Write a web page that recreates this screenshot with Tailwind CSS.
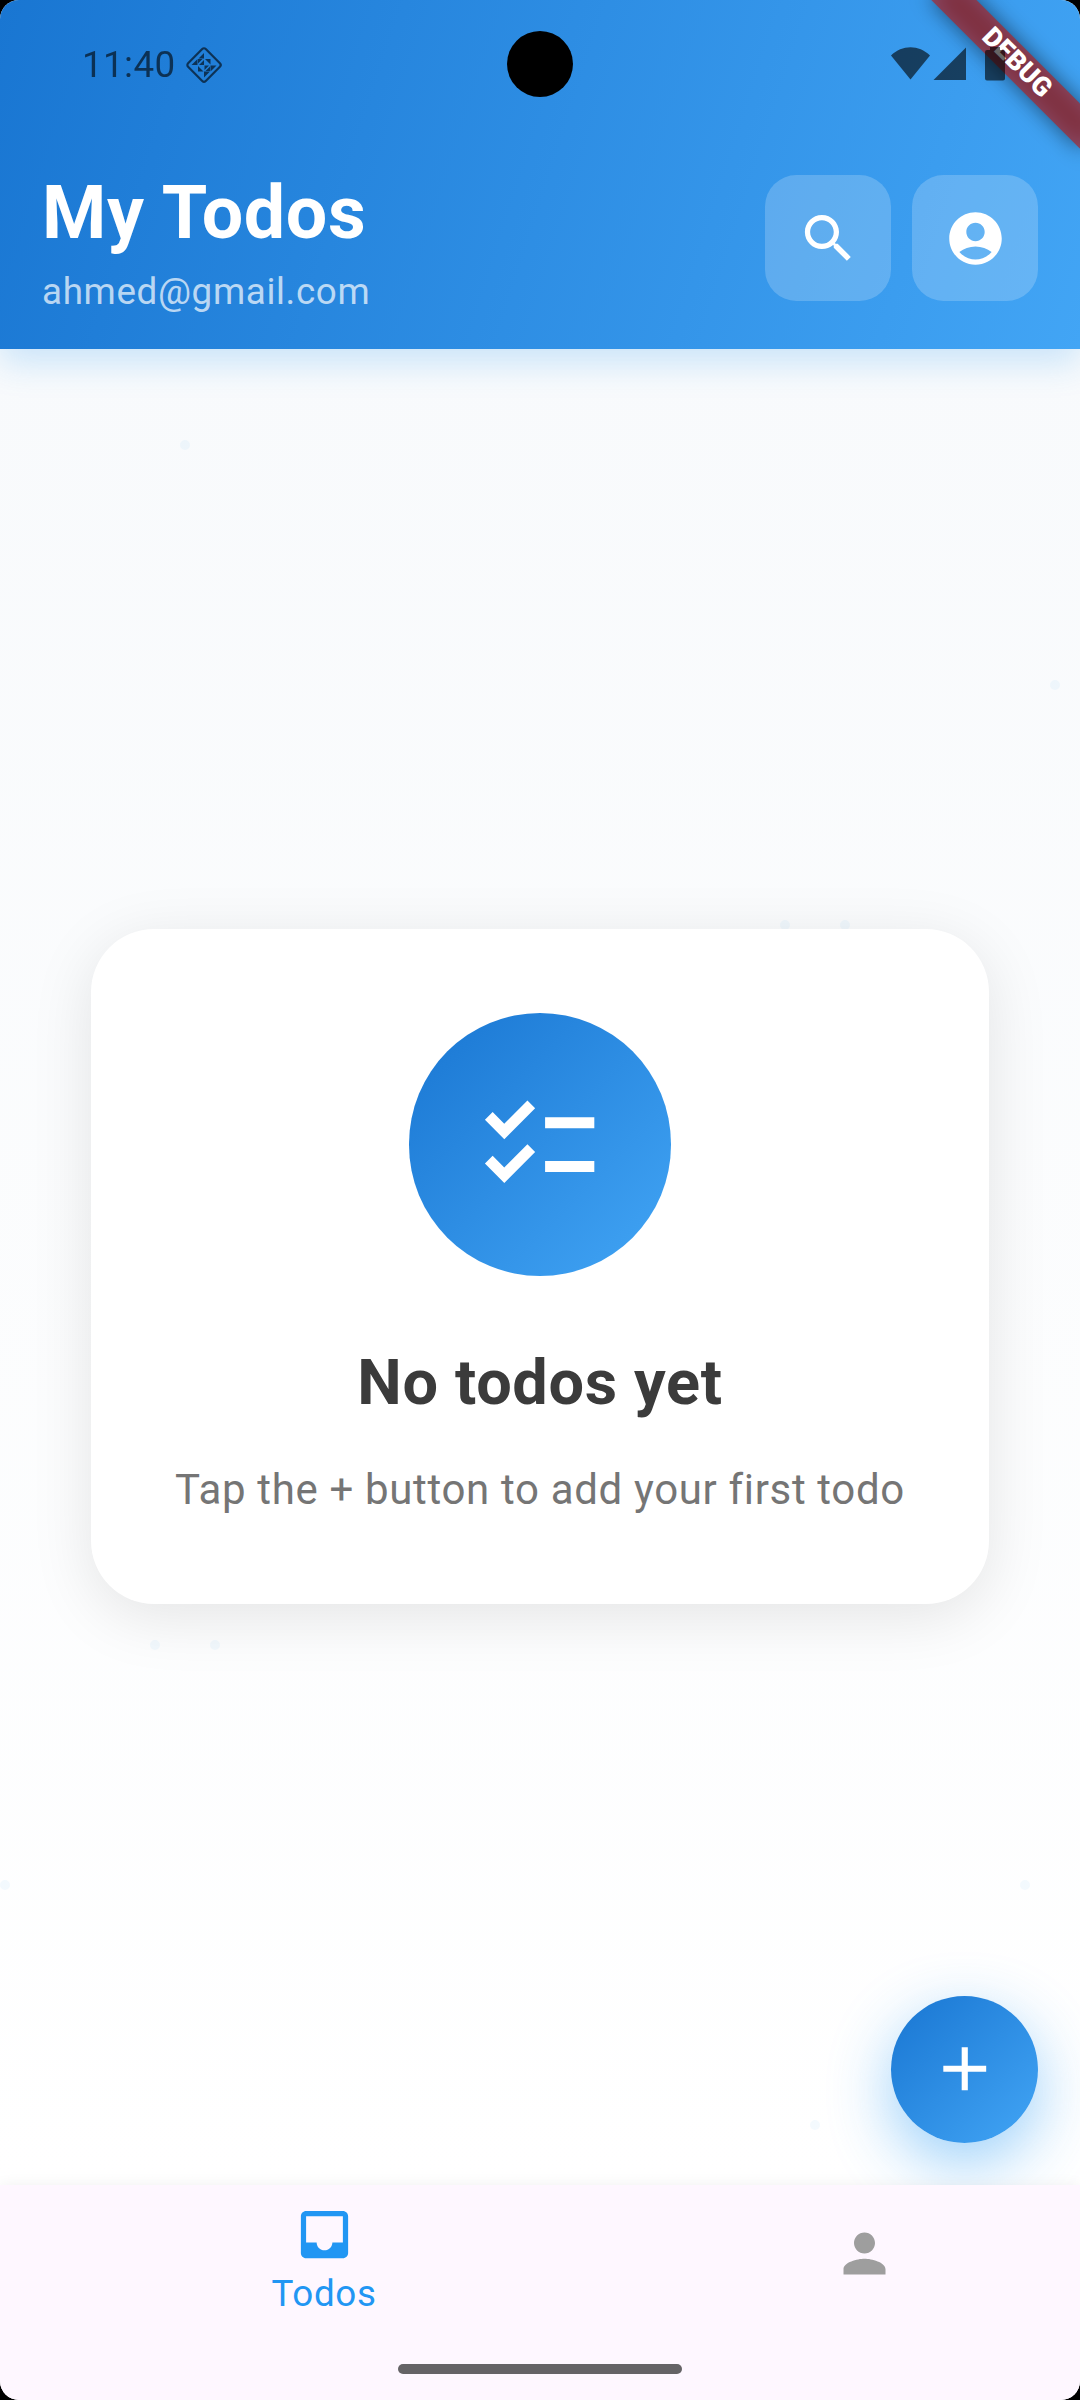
<!DOCTYPE html>
<html lang="en">
<head>
<meta charset="utf-8">
<title>My Todos</title>
<script src="https://cdn.jsdelivr.net/npm/@tailwindcss/browser@4"></script>
</head>
<body class="bg-black">
<div class="relative flex h-[2400px] w-[1080px] flex-col overflow-hidden rounded-[19px] bg-white font-[Roboto,sans-serif]">

  <header class="relative z-10 flex h-[349px] shrink-0 items-start justify-between bg-[linear-gradient(107.9deg,#1976d2,#42a5f5)] px-[42px] pt-[175px] shadow-[0_13px_33px_rgba(33,150,243,0.22)]">
    <div class="flex flex-col pt-px">
      <h1 class="text-[73.5px] leading-[74px] font-bold tracking-[0.656px] text-white">My Todos</h1>
      <p class="mt-[20px] text-[36.75px] leading-[44px] tracking-[0.656px] text-white/70">ahmed@gmail.com</p>
    </div>
    <div class="flex gap-[21px]">
      <button class="flex size-[126px] items-center justify-center rounded-[31.5px] bg-white/20">
        <svg class="size-[63px] fill-white" viewBox="0 0 24 24"><path d="M15.5 14h-.79l-.28-.27C15.41 12.59 16 11.11 16 9.5 16 5.91 13.09 3 9.5 3S3 5.91 3 9.5 5.91 16 9.5 16c1.61 0 3.09-.59 4.23-1.57l.27.28v.79l5 4.99L20.49 19l-4.99-5zm-6 0C7.01 14 5 11.99 5 9.5S7.01 5 9.5 5 14 7.01 14 9.5 11.99 14 9.5 14z"/></svg>
      </button>
      <button class="flex size-[126px] items-center justify-center rounded-[31.5px] bg-white/20">
        <svg class="size-[63px] fill-white" viewBox="0 0 24 24"><path d="M12 2C6.48 2 2 6.48 2 12s4.48 10 10 10 10-4.48 10-10S17.52 2 12 2zm0 4c1.93 0 3.5 1.57 3.5 3.5S13.93 13 12 13s-3.5-1.57-3.5-3.5S10.07 6 12 6zm0 14c-2.03 0-4.43-.82-6.14-2.88C7.55 15.8 9.68 15 12 15s4.45.8 6.14 2.12C16.43 19.18 14.03 20 12 20z"/></svg>
      </button>
    </div>
  </header>

  <main class="relative flex flex-1 flex-col items-center bg-[linear-gradient(180deg,#f8fafc,#ffffff)] pt-[580px]">
    <svg class="absolute inset-0 h-full w-full fill-[#2196f3]/5" viewBox="0 0 1080 1836">
      <circle cx="185" cy="96" r="5"/><circle cx="1055" cy="336" r="5"/>
      <circle cx="785" cy="576" r="5"/><circle cx="845" cy="576" r="5"/>
      <circle cx="155" cy="1296" r="5"/><circle cx="215" cy="1296" r="5"/>
      <circle cx="5" cy="1536" r="5"/><circle cx="1025" cy="1536" r="5"/>
      <circle cx="815" cy="1776" r="5"/>
    </svg>
    <section class="relative flex h-[675px] w-[898px] flex-col items-center rounded-[63px] bg-white pt-[84px] shadow-[0_13px_63px_rgba(0,0,0,0.1)]">
      <div class="flex size-[262.5px] items-center justify-center rounded-full bg-[linear-gradient(135deg,#1976d2,#42a5f5)]">
        <svg class="size-[131.25px] fill-white" viewBox="0 0 24 24"><path d="M22 7h-9v2h9V7zm0 8h-9v2h9v-2zM5.54 11L2 7.46l1.41-1.41 2.12 2.12 4.24-4.24 1.41 1.41L5.54 11zm0 8L2 15.46l1.41-1.41 2.12 2.12 4.24-4.24 1.41 1.41L5.54 19z"/></svg>
      </div>
      <h2 class="mt-[70px] text-[63px] leading-[74px] font-bold tracking-[0.656px] text-[#3b3b3b]">No todos yet</h2>
      <p class="mt-[46px] text-[42px] leading-[48px] tracking-[0.656px] text-[#757575]">Tap the + button to add your first todo</p>
    </section>
    <button class="absolute top-[1646.5px] right-[42px] flex size-[147px] items-center justify-center rounded-full bg-[linear-gradient(135deg,#1976d2,#42a5f5)] shadow-[0_21px_63px_rgba(33,150,243,0.45)]">
      <svg class="size-[73.5px] fill-white" viewBox="0 0 24 24"><path d="M19 13h-6v6h-2v-6H5v-2h6V5h2v6h6v2z"/></svg>
    </button>
  </main>

  <nav class="relative z-10 flex h-[215px] shrink-0 items-start bg-[#fef7ff] shadow-[0_0_14px_rgba(0,0,0,0.06)]">
    <a class="flex w-3/5 flex-col items-center pt-[18px] text-[#2196f3]">
      <svg class="size-[63px] fill-current" viewBox="0 0 24 24"><path d="M19 3H4.99c-1.11 0-1.98.89-1.98 2L3 19c0 1.1.88 2 1.99 2H19c1.1 0 2-.9 2-2V5c0-1.11-.9-2-2-2zm0 12h-4c0 1.66-1.35 3-3 3s-3-1.34-3-3H4.99V5H19v10z"/></svg>
      <span class="mt-[6px] text-[36.75px] leading-[44px] tracking-[0.656px]">Todos</span>
    </a>
    <a class="flex w-2/5 justify-center pt-[36.5px] text-[#9e9e9e]">
      <svg class="size-[63px] fill-current" viewBox="0 0 24 24"><path d="M12 12c2.21 0 4-1.79 4-4s-1.79-4-4-4-4 1.79-4 4 1.79 4 4 4zm0 2c-2.67 0-8 1.34-8 4v2h16v-2c0-2.66-5.33-4-8-4z"/></svg>
    </a>
    <div class="absolute top-[179px] left-[398px] h-[10px] w-[284px] rounded-[5px] bg-[#656366]"></div>
  </nav>

  <!-- Debug banner -->
  <div class="absolute top-0 right-0 z-20 size-[240px] overflow-hidden">
    <div class="absolute top-[47.36px] left-[71.9px] h-[31.5px] w-[210px] rotate-45 bg-black/50 blur-[10.4px]"></div>
    <div class="absolute top-[47.36px] left-[71.9px] flex h-[31.5px] w-[210px] rotate-45 items-center justify-center bg-[#b71c1c]/63 text-[26.8px] leading-none font-black text-white">DEBUG</div>
  </div>

  <!-- System status bar -->
  <div class="absolute inset-x-0 top-0 z-30 h-[130px]">
    <div class="flex h-full items-center pl-[82px] opacity-60">
      <span class="w-[102px] text-[36.75px] leading-[44px] tracking-[0.4px] text-black">11:40</span>
      <svg class="size-[40px]" viewBox="0 0 40 40"><rect x="7.500" y="7.500" width="25" height="25" rx="2.500" transform="rotate(45 20 20)" fill="none" stroke="#000" stroke-width="2.200"/><path d="M20 8v5.500h-5.500zM7.500 20l6-6v6zM14 14h4.500L14 18.500zM20 15v5h-5zM21 14h5.500v5.500zM14 21v5.500h5.500zM20.500 20.500H25l-4.500 4.500zM26 21.500V26h-4.500zM26.500 20.500h6l-6 6zM20 26.500h6l-6 6z"/></svg>
    </div>
    <svg class="absolute top-[46px] left-[888px] h-[38px] w-[122px] fill-black/60" viewBox="0 0 122 38"><path d="M3 9.500C14 -1.500 31 -1.500 42 9.500L22.500 33.500zM45.500 34H78V1.500zM102 1h10v3h3q2 0 2 2v26.500q0 2-2 2H99q-2 0-2-2V6q0-2 2-2h3z"/></svg>
    <div class="absolute top-[31px] left-[507px] size-[66px] rounded-full bg-black"></div>
  </div>
</div>
</body>
</html>
